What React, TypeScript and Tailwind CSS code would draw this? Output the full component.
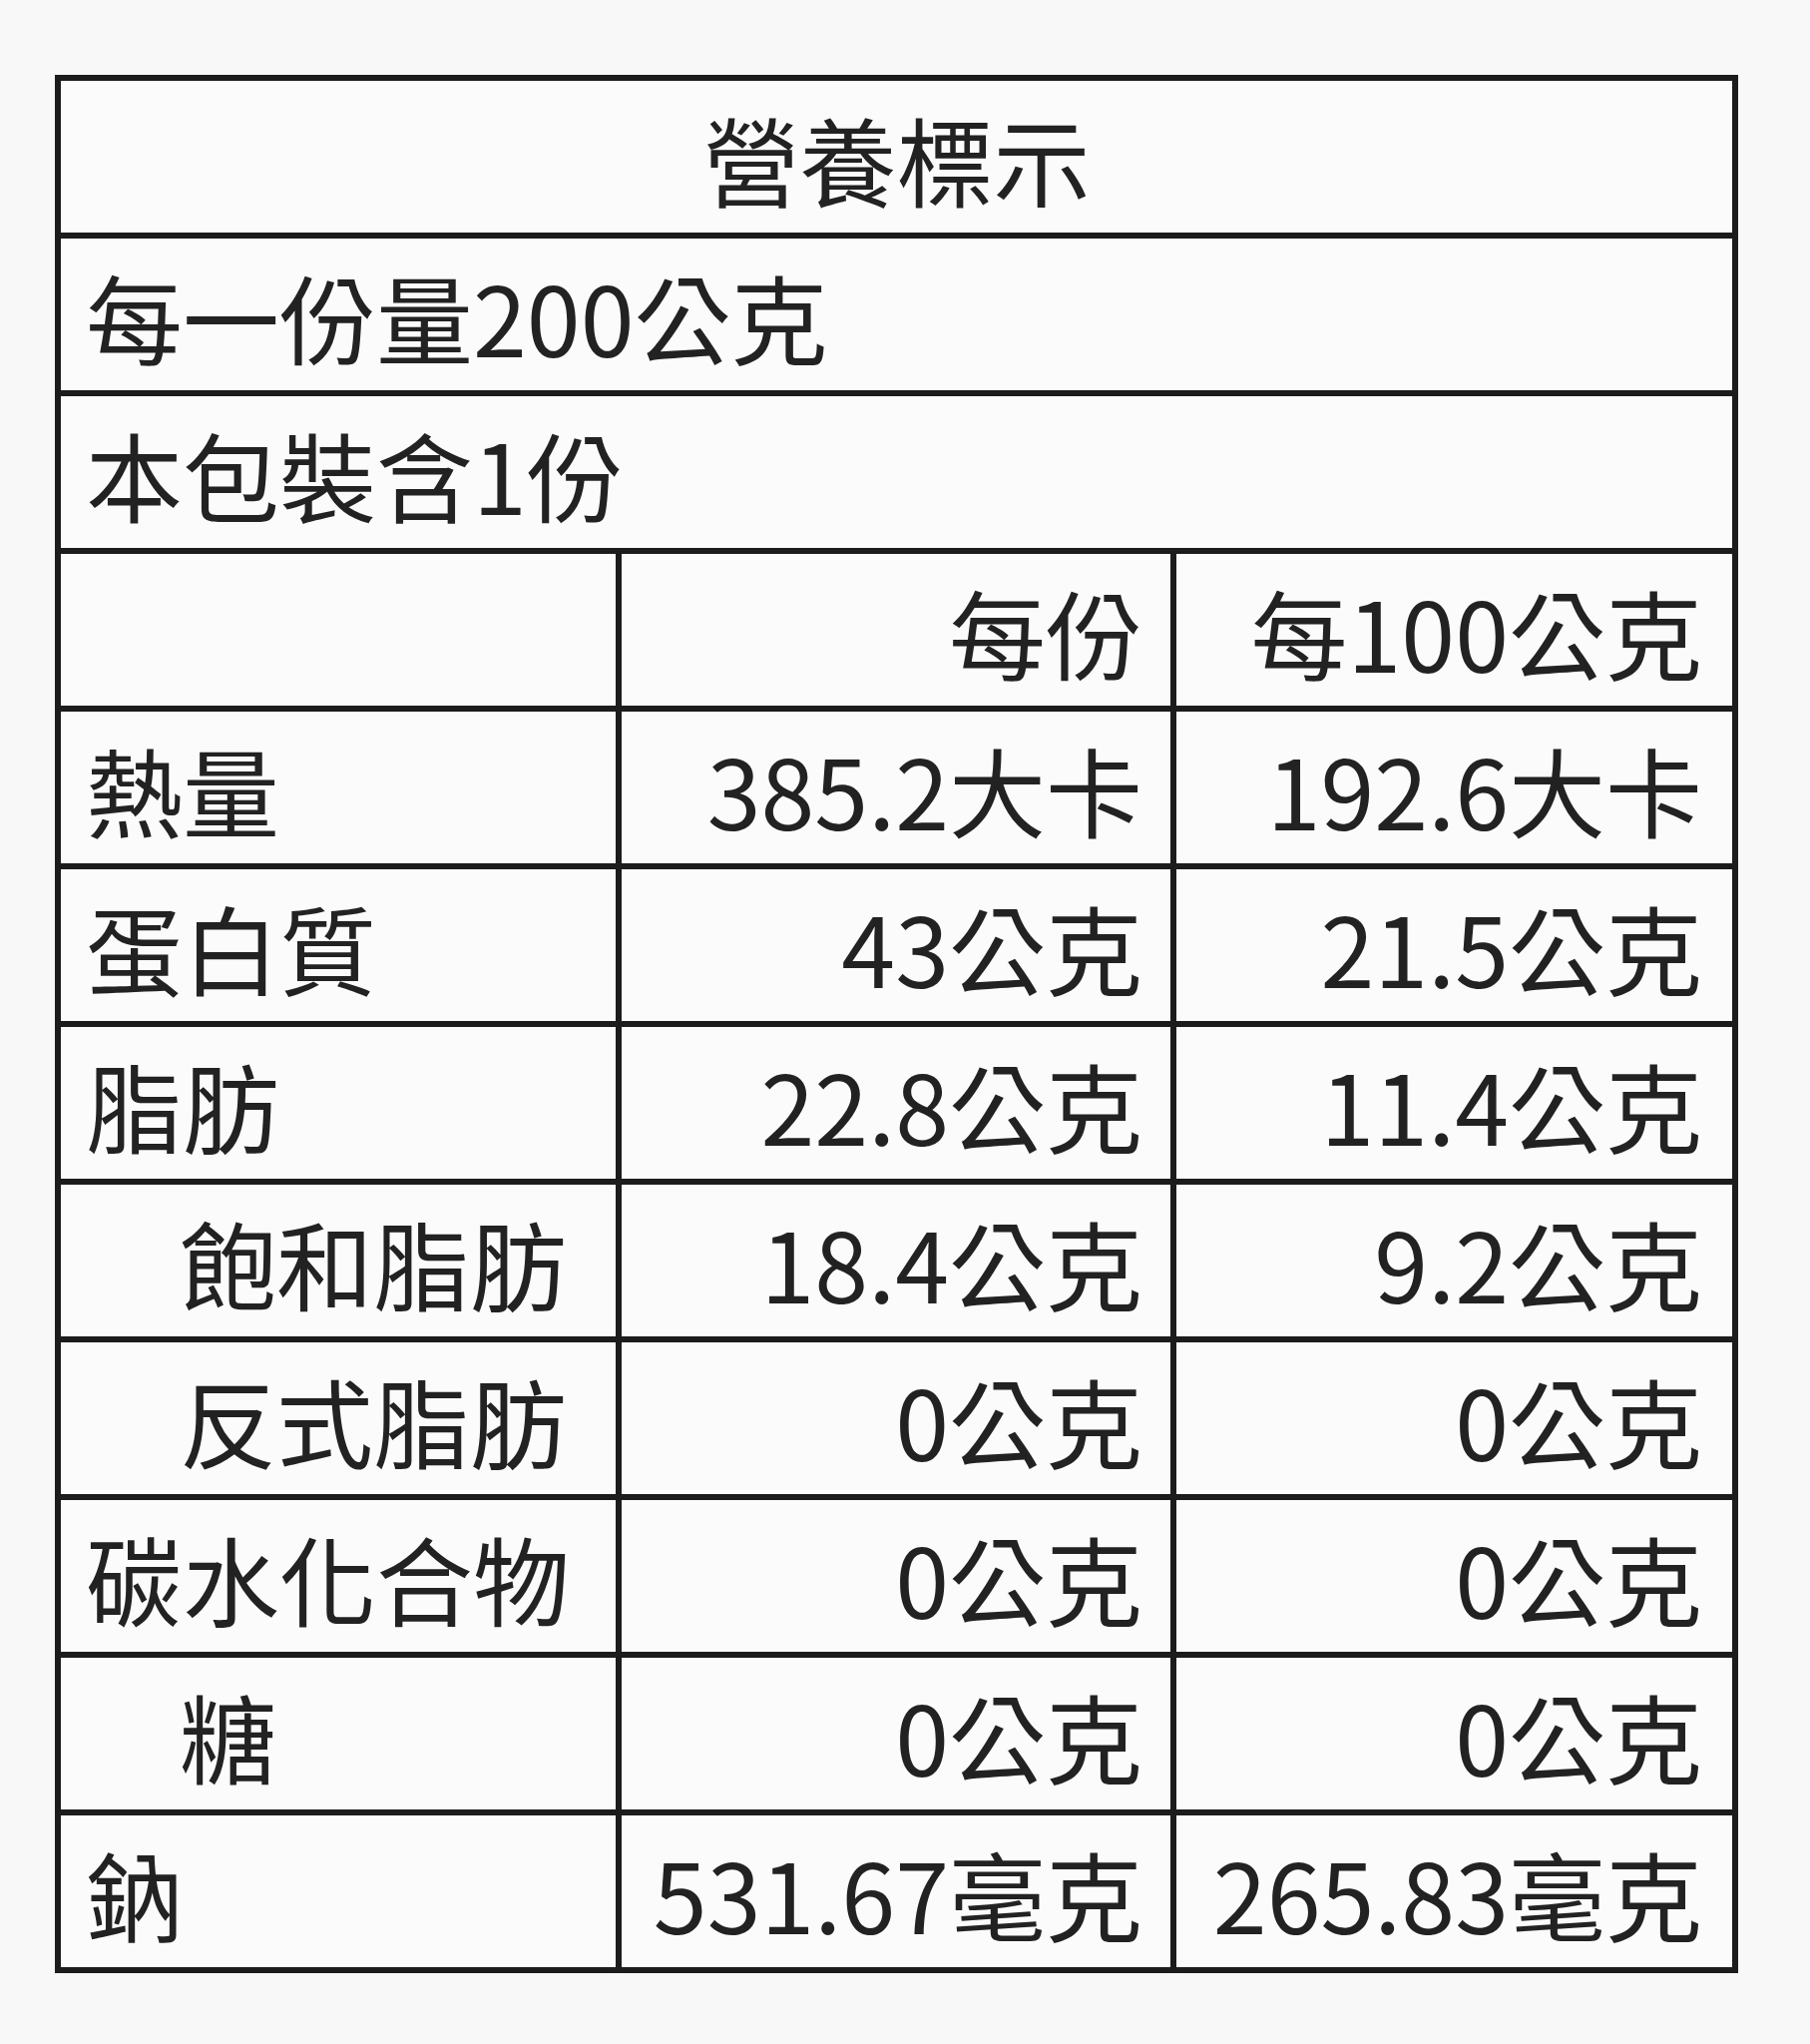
import React from "react";

type Row = { label: string; indent?: boolean; a: string; b: string };

const rows: Row[] = [
  { label: "熱量", a: "385.2大卡", b: "192.6大卡" },
  { label: "蛋白質", a: "43公克", b: "21.5公克" },
  { label: "脂肪", a: "22.8公克", b: "11.4公克" },
  { label: "飽和脂肪", indent: true, a: "18.4公克", b: "9.2公克" },
  { label: "反式脂肪", indent: true, a: "0公克", b: "0公克" },
  { label: "碳水化合物", a: "0公克", b: "0公克" },
  { label: "糖", indent: true, a: "0公克", b: "0公克" },
  { label: "鈉", a: "531.67毫克", b: "265.83毫克" },
];

export default function App() {
  return (
    <div
      className="min-h-[2048px] w-[1814px] bg-[#f8f8f9] pt-[75px] pl-[55px] text-[#222222]"
      style={{ fontFamily: '"Noto Sans CJK TC", "Noto Sans CJK SC", "Noto Sans", sans-serif' }}
    >
      <div className="grid w-[1687px] grid-cols-[556px_550px_557px] auto-rows-[152px] gap-[6px] bg-[#1c1c1c] p-[6px] text-[97px] leading-none">
        <div className="col-span-3 flex items-center justify-center bg-[#fbfbfc]">營養標示</div>
        <div className="col-span-3 flex items-center bg-[#fbfbfc] pl-[25px]">每一份量200公克</div>
        <div className="col-span-3 flex items-center bg-[#fbfbfc] pl-[25px]">本包裝含1份</div>
        <div className="bg-[#fbfbfc]" />
        <div className="flex items-center justify-end bg-[#fbfbfc] pr-[28px]">每份</div>
        <div className="flex items-center justify-end bg-[#fbfbfc] pr-[30px]">每100公克</div>
        {rows.map((r) => (
          <React.Fragment key={r.label}>
            <div className={r.indent ? "flex items-center bg-[#fbfbfc] pl-[119px]" : "flex items-center bg-[#fbfbfc] pl-[25px]"}>
              {r.label}
            </div>
            <div className="flex items-center justify-end bg-[#fbfbfc] pr-[28px]">{r.a}</div>
            <div className="flex items-center justify-end bg-[#fbfbfc] pr-[30px]">{r.b}</div>
          </React.Fragment>
        ))}
      </div>
    </div>
  );
}
